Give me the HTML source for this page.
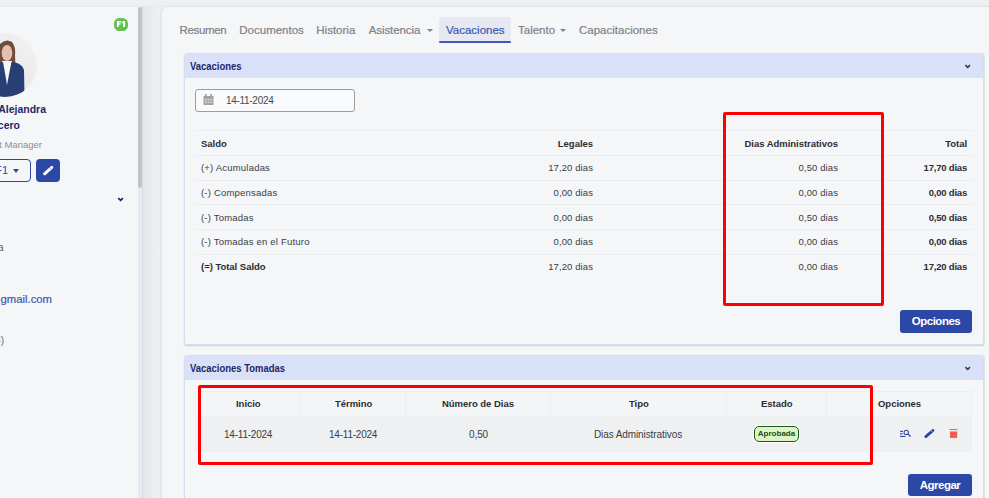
<!DOCTYPE html>
<html><head><meta charset="utf-8">
<style>
*{margin:0;padding:0;box-sizing:border-box}
html,body{width:989px;height:498px;overflow:hidden}
body{background:#eeeff1;font-family:"Liberation Sans",sans-serif;position:relative;color:#333}
.a{position:absolute;white-space:nowrap}
#top{left:0;top:0;width:989px;height:7px;background:linear-gradient(#eff0f2,#eeeff1 60%,#e7e8ea)}
#side{left:0;top:7px;width:142px;height:491px;background:#f5f6f8}
#thumbtrack{left:138px;top:7px;width:4px;height:491px;background:#e7e9f3}
#thumb{left:138px;top:7px;width:4px;height:181px;background:#c3c4c8;border-radius:2px}
#sideb{left:142px;top:7px;width:1px;height:491px;background:#dcdde1}
#gap{left:143px;top:7px;width:20px;height:491px;background:linear-gradient(90deg,#e4e5e8,#eaebee 35%,#eeeff1 80%,#ebecee)}
#main{left:162px;top:7px;width:840px;height:500px;background:#f5f6f8;border-radius:6px 0 0 0;box-shadow:-1px 0 3px rgba(0,0,0,0.06)}
.tab{top:22px;font-size:11.5px;color:#7e8187;line-height:16px;-webkit-text-stroke:0.2px currentColor}
.caret{width:0;height:0;border-left:3px solid transparent;border-right:3px solid transparent;border-top:3px solid #7e8187}
.card{background:#f5f6f8;border:1px solid #d6ddf3;border-radius:2.5px;box-shadow:0 1px 1.5px rgba(0,0,0,0.16),1px 0 1px rgba(0,0,0,0.05)}
.chd{background:#d9e1f9}
.ctitle{font-size:11px;font-weight:700;color:#1f2766;line-height:14px;transform-origin:0 0}
.hr{height:1px;background:#eaecef}
.th{font-size:9.5px;font-weight:700;color:#2b2d33;line-height:12px;letter-spacing:-0.03px}
.td{font-size:9.5px;color:#3a3c42;line-height:12px;letter-spacing:0.2px}
.tn{font-size:9.5px;color:#3a3c42;line-height:12px;letter-spacing:0.1px}
.tbn{font-size:9.5px;font-weight:700;color:#2b2d33;line-height:12px;letter-spacing:-0.2px}
.tb{font-size:9px;font-weight:700;color:#2b2d33;line-height:12px}
.btn{background:#2c48a6;border-radius:3px;color:#fff;font-weight:700;font-size:11.5px;text-align:center;letter-spacing:-0.5px}
.red{border:3px solid #ff0000;border-radius:2px}
</style></head>
<body>
<div id="top" class="a"></div>
<div id="side" class="a"></div>
<div id="thumbtrack" class="a"></div>
<div id="thumb" class="a"></div>
<div id="sideb" class="a"></div><div id="gap" class="a"></div>

<!-- sidebar content -->
<svg class="a" style="left:114px;top:18px" width="14" height="13" viewBox="0 0 14 13"><rect width="14" height="13" rx="5.5" fill="#5fc24c"/><g fill="#fff"><rect x="2.9" y="3.1" width="1.9" height="5.8"/><rect x="2.9" y="3.1" width="4.3" height="1.3"/><rect x="2.9" y="5.3" width="3.8" height="1.3"/><rect x="9.1" y="3.1" width="2" height="5.8"/><path d="M7.5 4.6 L9.3 3.1 L9.6 4.6 L8 5.6 Z"/></g></svg>

<svg class="a" style="left:-27px;top:32.5px" width="64" height="64" viewBox="0 0 64 64">
  <defs><clipPath id="cc"><circle cx="32" cy="32" r="32"/></clipPath>
  <linearGradient id="bgg" x1="1" y1="0" x2="0" y2="1"><stop offset="0" stop-color="#f4f3f4"/><stop offset="1" stop-color="#e2dfe2"/></linearGradient></defs>
  <g clip-path="url(#cc)">
    <rect width="64" height="64" fill="url(#bgg)"/>
    <path d="M25 33 Q23 18 27 11 Q33 5 39 9 Q43 14 42 22 L42.5 33 Z" fill="#6e4d3b"/>
    <ellipse cx="34" cy="20" rx="5.3" ry="8" fill="#e4bfae"/>
    <path d="M29 28 L39 28 L34 52 Z" fill="#f7f7f7"/>
    <path d="M15 64 L16.5 38 Q18 31 26 29.5 L30 29 L34 52 L38.5 29 L42 29.5 Q49.5 31 51 37 L51.5 64 Z" fill="#283f75"/><path d="M30 29 L34 52 L31 36 Z M38.5 29 L34 52 L37 36 Z" fill="#1f3366"/>
  </g>
</svg>

<div class="a" style="right:943px;top:102px;font-size:10.5px;font-weight:700;color:#1f2766;line-height:14px">Ana Alejandra</div>
<div class="a" style="right:969px;top:118px;font-size:10.5px;font-weight:700;color:#1f2766;line-height:14px">Lucero</div>
<div class="a" style="right:947px;top:139px;font-size:9.5px;color:#8a8e96;line-height:12px">Product Manager</div>

<div class="a" style="left:-40px;top:159px;width:71px;height:23px;border:1px solid #2c48a6;border-radius:4px"></div>
<div class="a" style="right:981px;top:164px;font-size:11px;color:#2c48a6;line-height:13px">F1</div>
<div class="a caret" style="left:13px;top:169px;border-left-width:3px;border-right-width:3px;border-top:4px solid #2c48a6"></div>
<div class="a" style="left:36px;top:159px;width:24px;height:23px;background:#2c48a6;border-radius:4px"></div>
<svg class="a" style="left:36px;top:159px" width="24" height="23" viewBox="0 0 24 23"><line x1="8.6" y1="14.8" x2="15.8" y2="8.4" stroke="#fff" stroke-width="3" stroke-linecap="round"/><path d="M13.5 8.3 L15.3 10.1" stroke="#2c48a6" stroke-width="0.6"/></svg>

<svg class="a" style="left:117px;top:197px" width="7" height="5" viewBox="0 0 7 5"><path d="M1.3 1.2 L3.6 3.3 L5.9 1.2" fill="none" stroke="#1a1f5e" stroke-width="1.7"/></svg>

<div class="a" style="right:985.5px;top:242px;font-size:10px;color:#5e5e5e;line-height:12px">Rancagua</div>
<div class="a" style="left:0.5px;top:292px;font-size:11.3px;color:#3b56b0;line-height:14px;-webkit-text-stroke:0.2px #3b56b0">gmail.com</div>
<div class="a" style="right:985px;top:334.5px;font-size:10px;color:#666;line-height:12px">+56 9 1234 5678)</div>

<!-- main -->
<div id="main" class="a"></div>

<div class="a tab" style="left:179.5px;letter-spacing:-0.35px">Resumen</div>
<div class="a tab" style="left:239.3px">Documentos</div>
<div class="a tab" style="left:316.3px">Historia</div>
<div class="a tab" style="left:368.8px;letter-spacing:-0.1px">Asistencia</div>
<div class="a caret" style="left:427px;top:29px"></div>
<div class="a" style="left:439px;top:17px;width:72px;height:26px;background:#e6e9f2;border-radius:3px 3px 0 0"></div><div class="a" style="left:439px;top:41px;width:72px;height:2px;background:#4259b2;border-radius:1px"></div>
<div class="a tab" style="left:446px;color:#3d57b0">Vacaciones</div>
<div class="a tab" style="left:518px">Talento</div>
<div class="a caret" style="left:560px;top:29px"></div>
<div class="a tab" style="left:579px">Capacitaciones</div>

<!-- card 1 -->
<div class="a card" style="left:184px;top:53px;width:800px;height:292px"></div>
<div class="a chd" style="left:185px;top:54px;width:798px;height:24px;border-radius:2px 2px 0 0"></div>
<div class="a ctitle" style="left:190px;top:59px;transform:scaleX(0.86)">Vacaciones</div>
<svg class="a" style="left:964px;top:64px" width="7" height="5" viewBox="0 0 7 5"><path d="M1.4 1.2 L3.7 3.3 L6 1.2" fill="none" stroke="#3d3d3d" stroke-width="1.7"/></svg>

<div class="a" style="left:195px;top:89px;width:160px;height:23px;border:1px solid #9c9c9c;border-radius:3px;background:#f9fafc"></div>
<svg class="a" style="left:203px;top:94px" width="11" height="11" viewBox="0 0 11 11"><rect x="0.5" y="2" width="10" height="9" fill="#a3a3a3"/><rect x="2" y="0" width="1.6" height="3" fill="#a3a3a3"/><rect x="7.4" y="0" width="1.6" height="3" fill="#a3a3a3"/><g fill="#e8e8e8"><rect x="2" y="5" width="1.5" height="1.3"/><rect x="4.7" y="5" width="1.5" height="1.3"/><rect x="7.4" y="5" width="1.5" height="1.3"/><rect x="2" y="7.6" width="1.5" height="1.3"/><rect x="4.7" y="7.6" width="1.5" height="1.3"/><rect x="7.4" y="7.6" width="1.5" height="1.3"/></g></svg>
<div class="a" style="left:226px;top:94.5px;font-size:10px;letter-spacing:-0.3px;color:#4a4a4a;line-height:12px">14-11-2024</div>

<!-- table 1 -->
<div class="a hr" style="left:195px;top:130px;width:777px"></div>
<div class="a hr" style="left:195px;top:155px;width:777px"></div>
<div class="a hr" style="left:195px;top:180px;width:777px"></div>
<div class="a hr" style="left:195px;top:204px;width:777px"></div>
<div class="a hr" style="left:195px;top:229px;width:777px"></div>
<div class="a hr" style="left:195px;top:254px;width:777px"></div>

<div class="a th" style="left:201px;top:138px">Saldo</div>
<div class="a th" style="right:396px;top:138px">Legales</div>
<div class="a th" style="right:151px;top:138px">Dias Administrativos</div>
<div class="a th" style="right:22px;top:138px">Total</div>

<div class="a td" style="left:201px;top:162px">(+) Acumuladas</div>
<div class="a td" style="left:201px;top:187px">(-) Compensadas</div>
<div class="a td" style="left:201px;top:212px">(-) Tomadas</div>
<div class="a td" style="left:201px;top:236px">(-) Tomadas en el Futuro</div>
<div class="a th" style="left:201px;top:261px">(=) Total Saldo</div>

<div class="a tn" style="right:396px;top:162px">17,20 dias</div>
<div class="a tn" style="right:396px;top:187px">0,00 dias</div>
<div class="a tn" style="right:396px;top:212px">0,00 dias</div>
<div class="a tn" style="right:396px;top:236px">0,00 dias</div>
<div class="a tn" style="right:396px;top:261px">17,20 dias</div>

<div class="a tn" style="right:151px;top:162px">0,50 dias</div>
<div class="a tn" style="right:151px;top:187px">0,00 dias</div>
<div class="a tn" style="right:151px;top:212px">0,50 dias</div>
<div class="a tn" style="right:151px;top:236px">0,00 dias</div>
<div class="a tn" style="right:151px;top:261px">0,00 dias</div>

<div class="a tbn" style="right:22px;top:162px">17,70 dias</div>
<div class="a tbn" style="right:22px;top:187px">0,00 dias</div>
<div class="a tbn" style="right:22px;top:212px">0,50 dias</div>
<div class="a tbn" style="right:22px;top:236px">0,00 dias</div>
<div class="a tbn" style="right:22px;top:261px">17,20 dias</div>

<div class="a red" style="left:723px;top:112px;width:161px;height:194px"></div>

<div class="a btn" style="left:900px;top:310px;width:72px;height:23px;line-height:23px">Opciones</div>

<!-- card 2 -->
<div class="a card" style="left:184px;top:355px;width:800px;height:160px"></div>
<div class="a chd" style="left:185px;top:356px;width:798px;height:24px;border-radius:2px 2px 0 0"></div>
<div class="a ctitle" style="left:190px;top:361px;transform:scaleX(0.86)">Vacaciones Tomadas</div>
<svg class="a" style="left:964px;top:366px" width="7" height="5" viewBox="0 0 7 5"><path d="M1.4 1.2 L3.7 3.3 L6 1.2" fill="none" stroke="#3d3d3d" stroke-width="1.7"/></svg>

<div class="a" style="left:195px;top:391px;width:777px;height:25px;background:#f4f5f7;border:1px solid #eceef1;border-bottom:0"></div>
<div class="a" style="left:195px;top:416px;width:777px;height:36px;background:#eff0f2"></div>
<div class="a" style="left:300px;top:391px;width:1px;height:25px;background:#ebedf0"></div>
<div class="a" style="left:405px;top:391px;width:1px;height:25px;background:#ebedf0"></div>
<div class="a" style="left:550px;top:391px;width:1px;height:25px;background:#ebedf0"></div>
<div class="a" style="left:726px;top:391px;width:1px;height:25px;background:#ebedf0"></div>
<div class="a" style="left:826px;top:391px;width:1px;height:25px;background:#ebedf0"></div>

<div class="a th" style="left:236px;top:398px">Inicio</div>
<div class="a th" style="left:335px;top:398px">Término</div>
<div class="a th" style="left:442px;top:398px">Número de Dias</div>
<div class="a th" style="left:629px;top:398px">Tipo</div>
<div class="a th" style="left:761px;top:398px">Estado</div>
<div class="a th" style="left:878px;top:398px">Opciones</div>

<div class="a td" style="left:224px;top:429px;font-size:10px;letter-spacing:-0.22px">14-11-2024</div>
<div class="a td" style="left:329px;top:429px;font-size:10px;letter-spacing:-0.22px">14-11-2024</div>
<div class="a td" style="left:469px;top:429px;font-size:10px;letter-spacing:-0.1px">0,50</div>
<div class="a td" style="left:594px;top:429px;font-size:10px;letter-spacing:-0.1px">Dias Administrativos</div>
<div class="a" style="left:754px;top:426px;width:45px;height:16px;border:1.5px solid #185a1c;border-radius:5px;background:#ddf5c5;box-shadow:0 0 0 1px #fff;color:#1a4f1e;font-size:8px;font-weight:700;line-height:13px;text-align:center">Aprobada</div>

<svg class="a" style="left:895px;top:422px" width="68" height="23" viewBox="0 0 68 23">
<g fill="#2c48a6"><rect x="5" y="8.8" width="3" height="1.1"/><rect x="5" y="11.3" width="2.6" height="1.1"/><rect x="5" y="13.9" width="5.5" height="1.1"/></g>
<circle cx="11.2" cy="10.4" r="2.15" fill="none" stroke="#2c48a6" stroke-width="1.05"/>
<path d="M12.8 12 L15.6 14.6" stroke="#2c48a6" stroke-width="1.3"/>
<line x1="30.8" y1="14.6" x2="38" y2="8.4" stroke="#2c48a6" stroke-width="2.8" stroke-linecap="round"/>
<path d="M35.6 8.2 L37.4 10" stroke="#eff0f2" stroke-width="0.6"/>
<rect x="54.3" y="7.1" width="8.3" height="1" fill="#f55a4e"/>
<rect x="55" y="9.5" width="7.2" height="6.4" fill="#f55a4e"/>
</svg>
<div class="a red" style="left:198px;top:385px;width:675px;height:80px"></div>

<div class="a btn" style="left:908px;top:474px;width:64px;height:22px;line-height:22px">Agregar</div>

</body></html>
